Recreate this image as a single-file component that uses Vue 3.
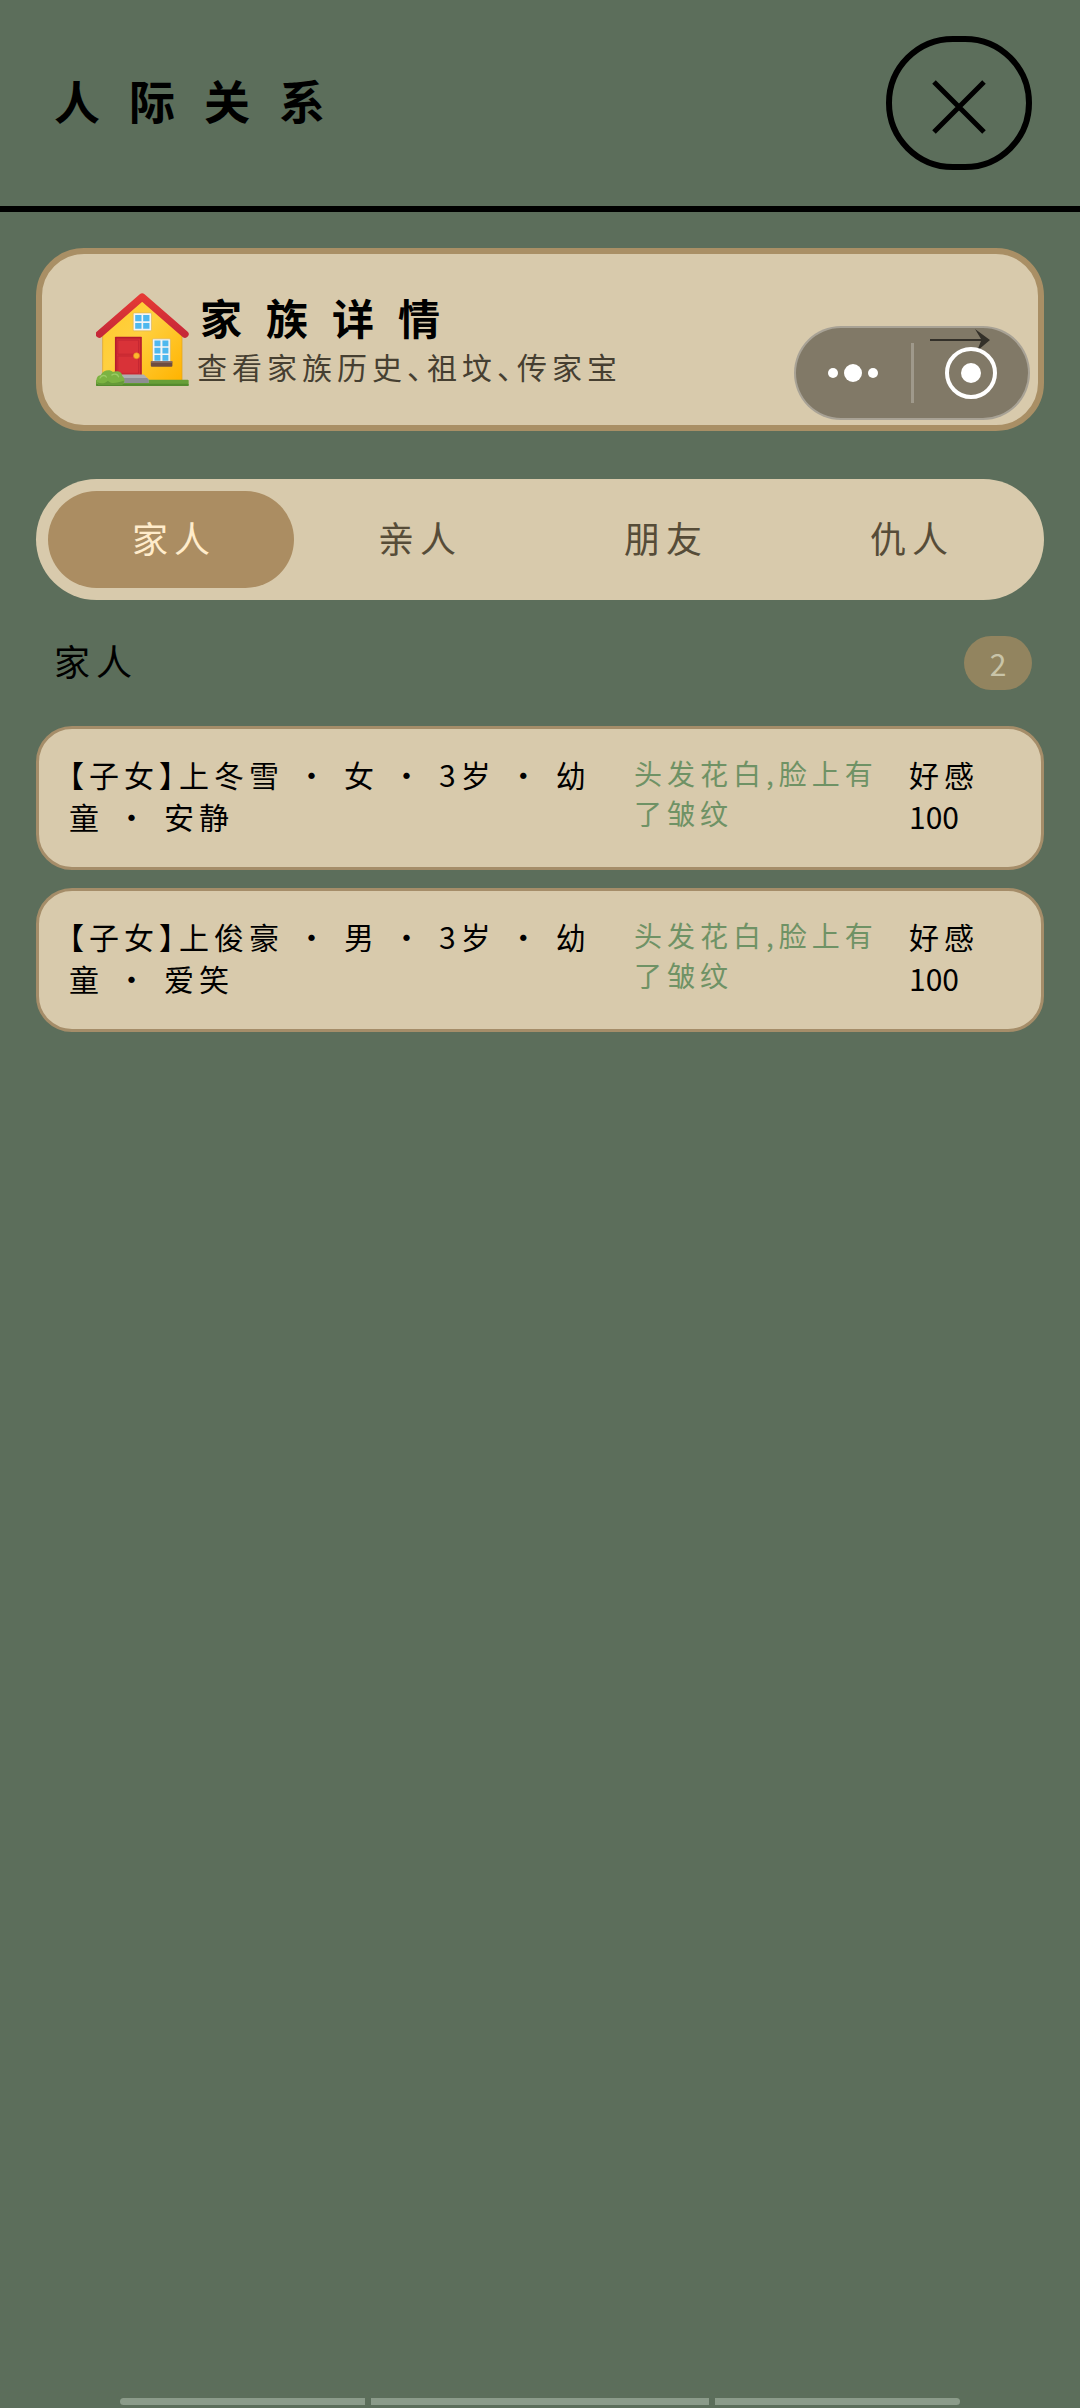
<template>
  <div class="page">
    <header class="topbar">
      <h1>人际关系</h1>
      <button class="close" type="button" aria-label="关闭">
        <svg viewBox="0 0 54 54" aria-hidden="true">
          <path d="M2 2 L52 52 M52 2 L2 52" />
        </svg>
      </button>
    </header>

    <main class="content">
      <!-- Family entry -->
      <button class="family" type="button">
        <svg class="house" viewBox="0 0 280 280" aria-hidden="true">
          <defs>
            <linearGradient id="wall" x1="0" y1="0" x2="1" y2="1">
              <stop offset="0" stop-color="#ffca28" />
              <stop offset="0.45" stop-color="#ffd040" />
              <stop offset="1" stop-color="#ffb300" />
            </linearGradient>
            <linearGradient id="roof" x1="0" y1="0" x2="0" y2="1">
              <stop offset="0" stop-color="#e53935" />
              <stop offset="1" stop-color="#c62838" />
            </linearGradient>
          </defs>
          <path d="M139 14 L259 120 V264 H20 V120 Z" fill="url(#wall)" stroke="#e0a020" stroke-width="2" />
          <path d="M10 124 L139 12 L268 124" fill="none" stroke="url(#roof)" stroke-width="22" stroke-linecap="round" stroke-linejoin="round" />
          <rect x="0" y="261" width="279" height="19" rx="3" fill="#689f38" />
          <rect x="0" y="273" width="279" height="7" rx="3" fill="#558b2f" />
          <!-- attic window -->
          <rect x="112" y="60" width="55" height="54" rx="3" fill="#f5f5f5" stroke="#d9b45a" stroke-width="2" />
          <path d="M118 66h19v19h-19z M142 66h19v19h-19z M118 90h19v18h-19z M142 90h19v18h-19z" fill="#4fb8ee" />
          <!-- side window -->
          <rect x="170" y="138" width="54" height="70" rx="3" fill="#f5f5f5" stroke="#d9b45a" stroke-width="2" />
          <path d="M176 143h18v17h-18z M200 143h18v17h-18z M176 165h18v17h-18z M200 165h18v17h-18z M176 187h18v17h-18z M200 187h18v17h-18z" fill="#4fb8ee" />
          <rect x="165" y="205" width="65" height="17" rx="3" fill="#6d4c41" />
          <rect x="165" y="205" width="65" height="5" rx="2" fill="#8d6e63" />
          <!-- door -->
          <rect x="57" y="132" width="81" height="116" rx="2" fill="#b71c2c" />
          <rect x="62" y="137" width="71" height="111" fill="#d32f35" />
          <path d="M66 142h62v42h-62z M66 190h62v52h-62z" fill="#d93238" stroke="#bf2431" stroke-width="2" />
          <circle cx="122" cy="189" r="9" fill="#ffb82e" stroke="#e08b1c" stroke-width="2" />
          <!-- steps -->
          <path d="M70 245 H144 L158 260 V271 H84 Z" fill="#b0aeb2" />
          <path d="M80 256 H154 L158 260 V271 H84 Z" fill="#8f8d93" />
          <!-- bush -->
          <path d="M3 272 C-2 258 5 248 14 248 C20 232 42 228 51 238 C66 232 79 239 79 250 C90 258 87 276 76 276 H8 Z" fill="#7cb342" />
          <path d="M3 268 C15 275 28 272 36 264 C46 276 65 270 84 264 C84 274 80 277 74 277 H8 Z" fill="#659a38" />
          <path d="M12 256 C18 246 28 247 31 253 M48 247 C55 241 66 245 68 252" fill="none" stroke="#9ccc65" stroke-width="4" stroke-linecap="round" />
        </svg>
        <span class="family-text">
          <span class="family-title">家族详情</span>
          <span class="family-desc">查看家族历史、祖坟、传家宝</span>
        </span>
        <svg class="arrow" viewBox="0 0 60 22" aria-hidden="true">
          <path d="M0 10 H51 L45 0 L60 11 L47 22 L51 12 H0 Z" />
        </svg>
      </button>

      <!-- Relation tabs -->
      <nav class="tabs">
        <button
          v-for="tab in tabs"
          :key="tab"
          type="button"
          class="tab"
          :class="{ active: tab === current }"
          @click="current = tab"
        >{{ tab }}</button>
      </nav>

      <div class="section-head">
        <h2>{{ current }}</h2>
        <span class="count">{{ members.length }}</span>
      </div>

      <ul class="members">
        <li v-for="m in members" :key="m.name" class="member">
          <span class="info">{{ describe(m) }}</span>
          <span class="look">{{ m.look }}</span>
          <span class="affinity">
            <span>好感</span>
            <span class="num">{{ m.affinity }}</span>
          </span>
        </li>
      </ul>
    </main>

    <div class="home-bar">
      <span /><span class="mid" /><span />
    </div>

    <!-- Floating mini-program capsule -->
    <div class="capsule">
      <button type="button" aria-label="更多">
        <svg viewBox="0 0 52 52" aria-hidden="true">
          <circle cx="6" cy="26" r="5" />
          <circle cx="26" cy="26" r="9" />
          <circle cx="46" cy="26" r="5" />
        </svg>
      </button>
      <span class="divider" />
      <button type="button" aria-label="退出">
        <svg viewBox="0 0 52 52" aria-hidden="true">
          <circle class="ring" cx="26" cy="26" r="24" />
          <circle cx="26" cy="26" r="10" />
        </svg>
      </button>
    </div>
  </div>
</template>

<script setup>
import { ref } from 'vue'

const tabs = ['家人', '亲人', '朋友', '仇人']
const current = ref('家人')

const members = [
  { relation: '子女', name: '上冬雪', gender: '女', age: 3, stage: '幼童', trait: '安静', look: '头发花白,脸上有了皱纹', affinity: 100 },
  { relation: '子女', name: '上俊豪', gender: '男', age: 3, stage: '幼童', trait: '爱笑', look: '头发花白,脸上有了皱纹', affinity: 100 },
]

// en spaces keep the bullets apart
function describe(m) {
  return [`【${m.relation}】${m.name}`, m.gender, `${m.age}岁`, m.stage, m.trait].join('\u2002•\u2002')
}
</script>

<style>
body { background: #5c6e5b; }
</style>

<style scoped>
.page {
  min-height: 100vh; display: flex; flex-direction: column; box-sizing: border-box;
  background: #5c6e5b; color: #000;
  font-family: "Noto Sans CJK SC", sans-serif; font-feature-settings: "halt";
}
.page * { box-sizing: border-box; }
button { font: inherit; font-feature-settings: inherit; color: inherit; background: none; border: none; padding: 0; cursor: pointer; }
h1, h2 { margin: 0; }

.topbar {
  display: flex; align-items: center; justify-content: space-between;
  padding: 36px 48px; border-bottom: 6px solid #000;
}
h1 { padding: 0 0 8px 6px; font-size: 46px; line-height: 60px; font-weight: 700; letter-spacing: 29px; }
.close {
  display: flex; align-items: center; justify-content: center;
  width: 146px; height: 134px; border: 6px solid #000; border-radius: 67px; padding-top: 8px;
}
.close svg { width: 54px; height: 54px; fill: none; stroke: #000; stroke-width: 5; }

.content { padding: 36px; }

.family {
  display: flex; align-items: center; width: 100%; padding: 36px 48px 36px 54px;
  min-height: 183px; background: #d8caac; border: 6px solid #a98f65; border-radius: 48px; text-align: left;
}
.house { width: 93px; height: 93px; flex: none; }
.family-text { display: flex; flex-direction: column; flex: 1; padding-left: 8px; }
.family-title { padding-left: 3px; font-size: 42px; line-height: 52px; font-weight: 700; letter-spacing: 24px; }
.family-desc { font-size: 30px; line-height: 46px; letter-spacing: 5px; color: #463f31; }
.arrow { width: 60px; height: 22px; fill: rgba(0, 0, 0, 0.6); }

.tabs { display: flex; margin-top: 48px; padding: 12px; background: #d8caac; border-radius: 61px; }
.tab {
  flex: 1; height: 97px; padding: 0 0 6px 6px; border-radius: 49px; text-align: center;
  font-size: 36px; line-height: 48px; letter-spacing: 6px; color: #564c38;
}
.tab.active { background: #ab8d62; color: #ffeccb; }

.section-head { display: flex; align-items: center; justify-content: space-between; margin-top: 36px; padding: 0 12px 0 18px; }
h2 { padding-bottom: 6px; font-size: 36px; line-height: 48px; font-weight: 400; letter-spacing: 6px; }
.count {
  min-width: 68px; padding: 0 24px; background: #92845f; border-radius: 27px; text-align: center;
  font-size: 30px; line-height: 54px; color: #c9c4a8;
}

.members { display: grid; gap: 18px; margin: 36px 0 0; padding: 0; list-style: none; }
.member {
  display: grid; grid-template-columns: 1fr 254px 102px; gap: 21px; min-height: 144px;
  padding: 24px 30px; background: #d8caac; border: 3px solid #a58d69; border-radius: 36px;
  font-size: 30px; line-height: 42px; letter-spacing: 5px;
}
.look { font-size: 28px; line-height: 40px; color: #6f9265; }
.affinity { display: flex; flex-direction: column; }
.num { letter-spacing: normal; }

.home-bar { display: flex; gap: 6px; margin-top: auto; padding: 0 120px 3px; }
.home-bar span { flex: 8; height: 7px; background: #8b9b8a; }
.home-bar .mid { flex: 11; }
.home-bar span:first-child { border-radius: 4px 0 0 4px; }
.home-bar span:last-child { border-radius: 0 4px 4px 0; }

.capsule {
  position: absolute; top: 326px; right: 50px; display: flex; align-items: center;
  width: 236px; height: 94px; background: rgba(0, 0, 0, 0.4);
  border: 2px solid rgba(255, 255, 255, 0.3); border-radius: 47px;
}
.capsule button { flex: 1; display: flex; justify-content: center; }
.capsule svg { width: 52px; height: 52px; fill: #fff; }
.capsule .ring { fill: none; stroke: #fff; stroke-width: 4; }
.divider { width: 3px; height: 60px; background: rgba(255, 255, 255, 0.24); }
</style>
